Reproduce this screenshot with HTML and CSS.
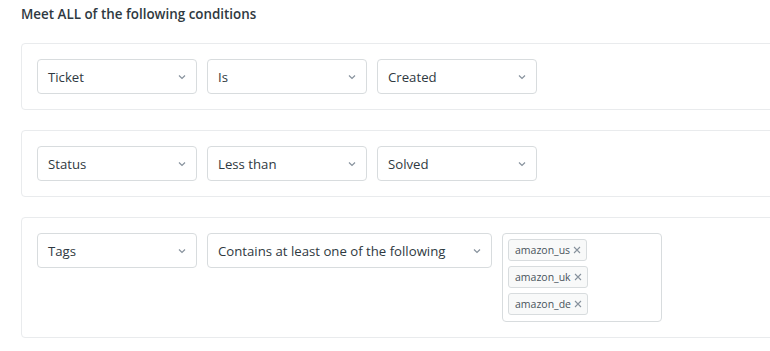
FILE: index.html
```html
<!doctype html>
<html lang="en">
  <head>
    <meta charset="UTF-8" />
    <meta name="viewport" content="width=device-width, initial-scale=1.0" />
    <title>Conditions</title>
    <link rel="stylesheet" href="styles.css">
  </head>
  <body>
    <section class="conditions">
      <h2 class="conditions-title">Meet ALL of the following conditions</h2>

      <div class="condition-row">
        <div class="select field-col">
          <span>Ticket</span>
          <svg class="chevron" viewBox="0 0 12 12"><path d="M3 4.5l3 3 3-3" /></svg>
        </div>
        <div class="select op-col">
          <span>Is</span>
          <svg class="chevron" viewBox="0 0 12 12"><path d="M3 4.5l3 3 3-3" /></svg>
        </div>
        <div class="select value-col">
          <span>Created</span>
          <svg class="chevron" viewBox="0 0 12 12"><path d="M3 4.5l3 3 3-3" /></svg>
        </div>
      </div>

      <div class="condition-row">
        <div class="select field-col">
          <span>Status</span>
          <svg class="chevron" viewBox="0 0 12 12"><path d="M3 4.5l3 3 3-3" /></svg>
        </div>
        <div class="select op-col">
          <span>Less than</span>
          <svg class="chevron" viewBox="0 0 12 12"><path d="M3 4.5l3 3 3-3" /></svg>
        </div>
        <div class="select value-col">
          <span>Solved</span>
          <svg class="chevron" viewBox="0 0 12 12"><path d="M3 4.5l3 3 3-3" /></svg>
        </div>
      </div>

      <div class="condition-row">
        <div class="select field-col">
          <span>Tags</span>
          <svg class="chevron" viewBox="0 0 12 12"><path d="M3 4.5l3 3 3-3" /></svg>
        </div>
        <div class="select op-wide">
          <span>Contains at least one of the following</span>
          <svg class="chevron" viewBox="0 0 12 12"><path d="M3 4.5l3 3 3-3" /></svg>
        </div>
        <div class="tag-box">
          <span class="tag">amazon_us<svg class="tag-close" viewBox="0 0 8 8"><path d="M1 1l6 6M7 1l-6 6" /></svg></span>
          <span class="tag">amazon_uk<svg class="tag-close" viewBox="0 0 8 8"><path d="M1 1l6 6M7 1l-6 6" /></svg></span>
          <span class="tag">amazon_de<svg class="tag-close" viewBox="0 0 8 8"><path d="M1 1l6 6M7 1l-6 6" /></svg></span>
        </div>
      </div>
    </section>
  </body>
</html>
```

FILE: styles.css
```css
* {
  margin: 0;
  padding: 0;
  box-sizing: border-box;
}
:root {
  --text: #2f3941;
  --muted: #87929d;
  --card-border: #e9ebed;
  --input-border: #d8dcde;
  --tag-bg: #f8f9f9;
}
body {
  background-color: #fff;
  color: var(--text);
  font-family: "Open Sans", "Noto Sans", sans-serif;
  font-size: 13.2px;
  overflow: hidden;
  width: 770px;
  height: 351px;
}
.conditions {
  padding: 5px 0 0 21px;
  width: 800px;
}
.conditions-title {
  font-size: 13.4px;
  font-weight: 600;
  line-height: 19px;
  margin-bottom: 19px;
}
.condition-row {
  display: flex;
  align-items: flex-start;
  gap: 10px;
  padding: 15px;
  border: 1px solid var(--card-border);
  border-radius: 4px;
  margin-bottom: 20px;
}
.select {
  display: flex;
  align-items: center;
  justify-content: space-between;
  height: 35px;
  padding: 0 8px 0 10px;
  border: 1px solid var(--input-border);
  border-radius: 4px;
  background-color: #fff;
}
.field-col,
.op-col,
.value-col {
  width: 160px;
}
.op-wide {
  width: 285px;
}
.chevron {
  width: 12px;
  height: 12px;
  fill: none;
  stroke: var(--muted);
  stroke-width: 1.2;
}
.tag-box {
  display: flex;
  flex-direction: column;
  align-items: flex-start;
  gap: 5px;
  width: 160px;
  padding: 5px 5px 6px;
  border: 1px solid var(--input-border);
  border-radius: 4px;
}
.tag {
  display: inline-flex;
  align-items: center;
  height: 22px;
  padding: 0 5px 0 6px;
  font-size: 10.5px;
  color: #49545c;
  background-color: var(--tag-bg);
  border: 1px solid var(--input-border);
  border-radius: 3px;
}
.tag-close {
  width: 8px;
  height: 8px;
  margin-left: 3px;
  fill: none;
  stroke: var(--muted);
  stroke-width: 1.1;
}
```
